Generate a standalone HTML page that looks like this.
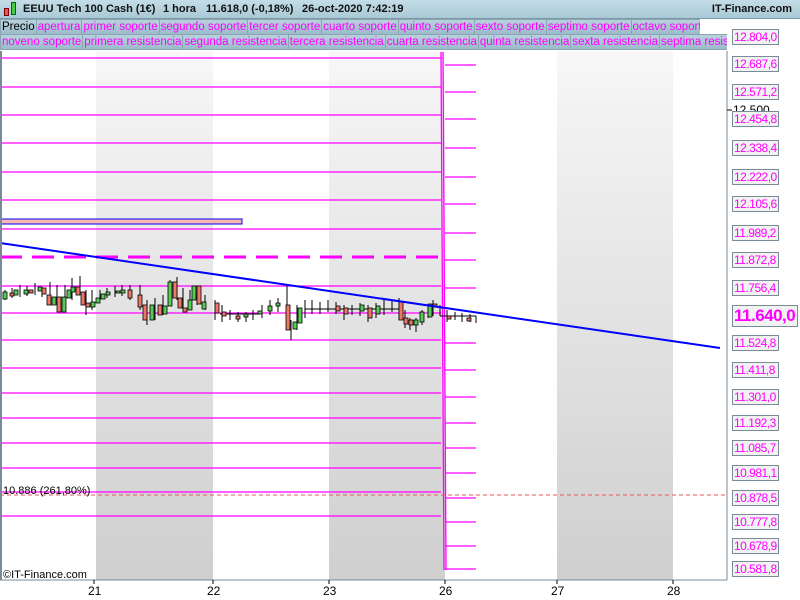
<!DOCTYPE html><html><head><meta charset="utf-8"><style>
*{margin:0;padding:0;box-sizing:border-box}
body{width:800px;height:600px;overflow:hidden;background:#fff;font-family:"Liberation Sans",sans-serif;position:relative}
.title{position:absolute;left:0;top:0;width:800px;height:19px;background:linear-gradient(#c4dde8,#a9c9d6);border-bottom:1px solid #7a98a6;font-size:11px;font-weight:bold;line-height:19px;color:#111}
.title b{position:absolute}
.row{position:absolute;left:0;height:16px;display:flex;font-size:11.5px;line-height:14px;white-space:nowrap;overflow:hidden}
.row span{background:linear-gradient(#b8d2dd,#9bbccb);border:1px solid #8aa4b0;color:#f0f;padding:0 1px;margin-right:-1px}
.lab{position:absolute;left:732px;width:47px;height:16px;border:1px solid #7a8a96;background:#f2f2f2;color:#f0f;font-size:12px;letter-spacing:-0.5px;line-height:14px;padding-left:1px;overflow:hidden;white-space:nowrap}
.lab:before{content:"";position:absolute;left:-6px;top:7px;width:5px;height:1px;background:#f0f}
.d{position:absolute;top:584px;font-size:12px}
</style></head><body>
<svg width="800" height="600" style="position:absolute;left:0;top:0">
<defs><linearGradient id="g" x1="0" y1="0" x2="0" y2="1"><stop offset="0" stop-color="#f7f7f7"/><stop offset="1" stop-color="#cfcfcf"/></linearGradient></defs>
<rect x="96" y="51" width="117" height="529" fill="url(#g)"/>
<rect x="329" y="51" width="116" height="529" fill="url(#g)"/>
<rect x="557" y="51" width="116" height="529" fill="url(#g)"/>
<g stroke="#f0f" stroke-width="1.3" fill="none">
<path d="M0 58H441M0 87H441M0 115H441M0 143H441M0 172H441M0 200H441M0 229H441M0 286H441M0 313H441M0 340H441M0 368H441M0 393H441M0 418H441M0 443H441M0 468H441M0 492H441M0 516H441"/>
<path d="M441 52L444 570M443 52L446 570"/>
<path d="M445 65H476M445 92H476M445 119H476M445 148H476M445 177H476M445 204H476M445 233H476M445 260H476M445 288H476M445 343H476M445 370H476M445 397H476M445 423H476M445 448H476M445 473H476M445 498H476M445 522H476M445 546H476M445 569H476"/>
</g>
<path d="M0 257H441" stroke="#f0f" stroke-width="3" stroke-dasharray="22 10"/>
<rect x="1" y="219" width="241" height="5" fill="#f5b9b0" stroke="#00f" stroke-width="1"/>
<path d="M0 495H727" stroke="#e55" stroke-width="1" stroke-dasharray="4 3"/>
<g stroke="#000" stroke-width="1">
<path d="M5 290V300M12 288V298M20 285V297M27 286V296M35 283V295M42 287V297M50 282V300M57 285V305M65 285V310M72 278V300M80 276V292M86 290V315M92 290V310M100 290V300M107 288V298M115 286V297M122 285V296M130 285V300M140 285V310M147 300V325M155 298V320M163 295V315M170 280V305M177 277V300M183 288V310M190 290V300M197 293V305M205 295V310M215 300V320M222 305V322M230 310V320M238 312V322M246 312V322M253 310V320M262 305V318M270 300V315M278 298V312M287 285V330M291 320V340M297 305V330M305 300V318M312 300V314M320 302V314M328 300V312M336 302V314M344 305V320M352 305V315M360 303V316M368 305V322M376 303V318M384 300V315M392 300V312M399 298V320M405 310V328M410 318V330M416 318V332M422 310V325M428 305V318M433 300V316M440 305V316M447 310V322M455 312V320M462 313V322M470 314V322M476 316V323"/>
<path d="M220 314H260M305 309H400M440 316H476"/>
</g>
<g stroke="#000" stroke-width=".8">
<rect x="3" y="292" width="4" height="7" fill="#5c5"/><rect x="10" y="293" width="4" height="3" fill="#e76"/><rect x="14" y="290" width="4" height="5" fill="#5c5"/><rect x="24" y="290" width="4" height="4" fill="#5c5"/><rect x="29" y="290" width="4" height="3" fill="#e76"/><rect x="38" y="287" width="4" height="4" fill="#5c5"/><rect x="42" y="288" width="4" height="6" fill="#e76"/><rect x="47" y="295" width="4" height="10" fill="#e76"/><rect x="52" y="297" width="4" height="8" fill="#5c5"/><rect x="57" y="297" width="4" height="15" fill="#e76"/><rect x="62" y="297" width="4" height="15" fill="#5c5"/><rect x="67" y="290" width="4" height="8" fill="#5c5"/><rect x="71" y="287" width="4" height="5" fill="#5c5"/><rect x="76" y="287" width="4" height="8" fill="#e76"/><rect x="81" y="292" width="4" height="13" fill="#e76"/><rect x="86" y="303" width="4" height="4" fill="#e76"/><rect x="91" y="302" width="4" height="5" fill="#5c5"/><rect x="96" y="298" width="4" height="5" fill="#5c5"/><rect x="101" y="294" width="4" height="5" fill="#5c5"/><rect x="106" y="292" width="4" height="3" fill="#5c5"/><rect x="116" y="291" width="4" height="2" fill="#5c5"/><rect x="121" y="290" width="4" height="3" fill="#5c5"/><rect x="128" y="290" width="4" height="8" fill="#e76"/><rect x="138" y="295" width="4" height="12" fill="#e76"/><rect x="143" y="305" width="4" height="15" fill="#e76"/><rect x="150" y="305" width="4" height="15" fill="#5c5"/><rect x="158" y="305" width="4" height="10" fill="#e76"/><rect x="163" y="306" width="4" height="8" fill="#5c5"/><rect x="168" y="282" width="4" height="24" fill="#5c5"/><rect x="173" y="282" width="4" height="16" fill="#e76"/><rect x="178" y="298" width="4" height="10" fill="#e76"/><rect x="183" y="308" width="4" height="4" fill="#e76"/><rect x="188" y="300" width="4" height="10" fill="#5c5"/><rect x="192" y="286" width="4" height="14" fill="#5c5"/><rect x="197" y="286" width="4" height="18" fill="#e76"/><rect x="202" y="302" width="4" height="7" fill="#5c5"/><rect x="215" y="303" width="4" height="10" fill="#e76"/><rect x="222" y="312" width="4" height="4" fill="#e76"/><rect x="236" y="316" width="4" height="3" fill="#e76"/><rect x="244" y="314" width="4" height="3" fill="#5c5"/><rect x="258" y="311" width="4" height="3" fill="#5c5"/><rect x="268" y="306" width="4" height="5" fill="#5c5"/><rect x="276" y="303" width="4" height="3" fill="#5c5"/><rect x="286" y="305" width="4" height="25" fill="#e76"/><rect x="293" y="322" width="4" height="7" fill="#5c5"/><rect x="298" y="308" width="4" height="15" fill="#5c5"/><rect x="336" y="306" width="4" height="5" fill="#e76"/><rect x="344" y="308" width="4" height="6" fill="#e76"/><rect x="360" y="305" width="4" height="6" fill="#5c5"/><rect x="368" y="308" width="4" height="10" fill="#e76"/><rect x="376" y="306" width="4" height="8" fill="#5c5"/><rect x="399" y="302" width="4" height="18" fill="#e76"/><rect x="404" y="318" width="4" height="6" fill="#e76"/><rect x="409" y="320" width="4" height="5" fill="#e76"/><rect x="414" y="320" width="4" height="5" fill="#5c5"/><rect x="420" y="312" width="4" height="10" fill="#5c5"/><rect x="428" y="304" width="4" height="13" fill="#5c5"/><rect x="433" y="304" width="4" height="3" fill="#e76"/><rect x="447" y="316" width="4" height="3" fill="#e76"/><rect x="467" y="318" width="4" height="3" fill="#e76"/>
</g>
<path d="M0 243L720 348" stroke="#00f" stroke-width="2"/>
<path d="M727 51V580M0 580H727" stroke="#7a8a96" stroke-width="1"/>
<path d="M1 51V580" stroke="#7a8a96" stroke-width="2"/>
<g stroke="#000"><path d="M94 580v4M213 580v4M329 580v4M445 580v4M557 580v4M673 580v4M727 110h5"/></g>
<text x="733" y="114" font-size="12" font-family="Liberation Sans" fill="#000">12.500</text>
<text x="3" y="494" font-size="11" font-family="Liberation Sans" fill="#000">10.886 (261,80%)</text>
<text x="3" y="578" font-size="11" font-family="Liberation Sans" fill="#000">©IT-Finance.com</text>
</svg>
<div class="title"><span style="position:absolute;left:4px;top:8px;width:5px;height:8px;background:#e55;border:1px solid #700"></span><span style="position:absolute;left:11px;top:2px;width:5px;height:13px;background:#4c4;border:1px solid #060"></span><b style="left:23px">EEUU Tech 100 Cash (1€)</b><b style="left:163px">1 hora</b><b style="left:206px">11.618,0 (-0,18%)</b><b style="left:302px">26-oct-2020 7:42:19</b><b style="right:8px">IT-Finance.com</b></div>
<div class="row" style="top:19px;width:700px"><span style="color:#000">Precio</span><span>apertura</span><span>primer soporte</span><span>segundo soporte</span><span>tercer soporte</span><span>cuarto soporte</span><span>quinto soporte</span><span>sexto soporte</span><span>septimo soporte</span><span>octavo soporte</span></div>
<div class="row" style="top:34px;width:727px"><span>noveno soporte</span><span>primera resistencia</span><span>segunda resistencia</span><span>tercera resistencia</span><span>cuarta resistencia</span><span>quinta resistencia</span><span>sexta resistencia</span><span>septima resistencia</span></div>
<div class="lab" style="top:29px">12.804,0</div>
<div class="lab" style="top:56px">12.687,6</div>
<div class="lab" style="top:84px">12.571,2</div>
<div class="lab" style="top:111px">12.454,8</div>
<div class="lab" style="top:140px">12.338,4</div>
<div class="lab" style="top:169px">12.222,0</div>
<div class="lab" style="top:196px">12.105,6</div>
<div class="lab" style="top:225px">11.989,2</div>
<div class="lab" style="top:252px">11.872,8</div>
<div class="lab" style="top:280px">11.756,4</div>
<div class="lab" style="top:305px;width:66px;height:22px;font-size:17px;font-weight:bold;line-height:20px;letter-spacing:-0.5px">11.640,0</div>
<div class="lab" style="top:335px">11.524,8</div>
<div class="lab" style="top:362px">11.411,8</div>
<div class="lab" style="top:389px">11.301,0</div>
<div class="lab" style="top:415px">11.192,3</div>
<div class="lab" style="top:440px">11.085,7</div>
<div class="lab" style="top:465px">10.981,1</div>
<div class="lab" style="top:490px">10.878,5</div>
<div class="lab" style="top:514px">10.777,8</div>
<div class="lab" style="top:538px">10.678,9</div>
<div class="lab" style="top:561px">10.581,8</div>
<div class="d" style="left:88px">21</div><div class="d" style="left:207px">22</div><div class="d" style="left:323px">23</div><div class="d" style="left:439px">26</div><div class="d" style="left:551px">27</div><div class="d" style="left:667px">28</div>
</body></html>
